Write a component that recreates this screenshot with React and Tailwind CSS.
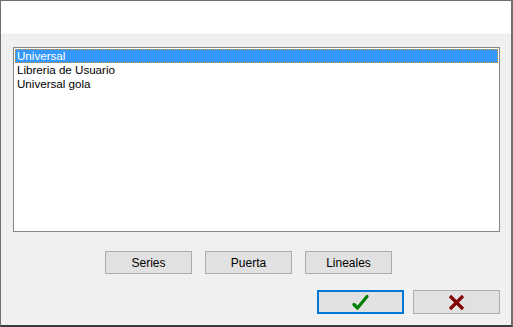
// App.jsx
import React from 'react';

const items = ['Universal', 'Libreria de Usuario', 'Universal gola'];

const CheckIcon = () => (
  <svg width="17" height="17" viewBox="0 0 17 17">
    <polyline points="2,10.5 5.5,14 15,2.5" fill="none" stroke="#008000" strokeWidth="3.2" strokeLinecap="round" strokeLinejoin="round" />
  </svg>
);

const CrossIcon = () => (
  <svg width="17" height="17" viewBox="0 0 17 17">
    <path d="M2 2 L15 15 M15 2 L2 15" fill="none" stroke="#800000" strokeWidth="3.2" />
  </svg>
);

function SmallButton({ label }) {
  return (
    <button className="w-[87px] h-[23px] bg-[#e1e1e1] border border-[#adadad] text-[12px] text-black flex items-center justify-center">
      {label}
    </button>
  );
}

function App() {
  const selected = 0;
  return (
    <div
      className="w-[513px] h-[327px] border-l border-t border-r-2 border-b-2 border-l-[#6f6f6f] border-t-[#6f6f6f] border-r-[#6f6f6f] border-b-[#3a3a3a] bg-[#f0f0f0] flex flex-col overflow-hidden"
      style={{ fontFamily: '"Liberation Sans", Arial, sans-serif' }}
    >
      {/* header */}
      <div className="h-[34px] bg-white border-b border-[#e9e9e9] shrink-0" />

      {/* list */}
      <div className="ml-[12px] mt-[12px] w-[487px] h-[185px] bg-white border border-[#828790] p-px">
        {items.map((item, i) => (
          <div
            key={item}
            className={
              i === selected
                ? 'h-[14px] leading-[14px] px-[2px] text-[11.6px] text-white bg-[#3399ff] outline-1 outline-dotted outline-[#e08a2a] -outline-offset-1'
                : 'h-[14px] leading-[14px] px-[2px] text-[11.6px] text-black'
            }
          >
            {item}
          </div>
        ))}
      </div>

      {/* option buttons */}
      <div className="flex gap-[13px] ml-[104px] mt-[19px]">
        <SmallButton label="Series" />
        <SmallButton label="Puerta" />
        <SmallButton label="Lineales" />
      </div>

      {/* ok / cancel */}
      <div className="flex gap-[9px] ml-[316px] mt-[16px]">
        <button className="w-[87px] h-[24px] bg-[#e1e1e1] border-2 border-[#0078d7] flex items-center justify-center">
          <CheckIcon />
        </button>
        <button className="w-[87px] h-[24px] bg-[#e1e1e1] border border-[#adadad] flex items-center justify-center">
          <CrossIcon />
        </button>
      </div>
    </div>
  );
}

export default App;
